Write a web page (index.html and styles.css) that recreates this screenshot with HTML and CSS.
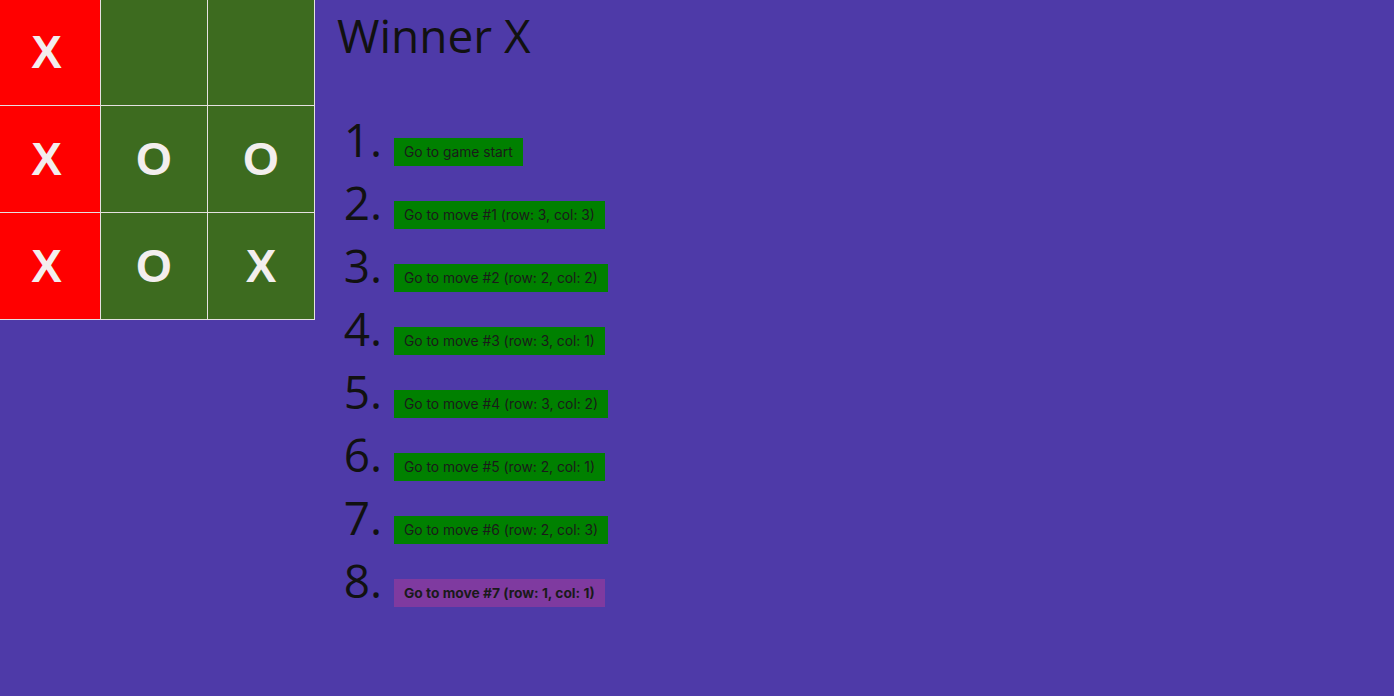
FILE: index.html
```html
<!DOCTYPE html>
<html lang="en">
<head>
    <meta charset="UTF-8">
    <meta name="viewport" content="width=device-width, initial-scale=1.0">
    <title>Tic Tac Toe</title>
    <link rel="stylesheet" href="styles.css">
</head>
<body>

    <div class="game">
        <div class="game-board">
            <div class="board-row">
                <button class="square win">X</button>
                <button class="square"></button>
                <button class="square"></button>
            </div>
            <div class="board-row">
                <button class="square win">X</button>
                <button class="square">O</button>
                <button class="square">O</button>
            </div>
            <div class="board-row">
                <button class="square win">X</button>
                <button class="square">O</button>
                <button class="square">X</button>
            </div>
        </div>

        <div class="game-info">
            <div class="status">Winner X</div>
            <ol class="moves">
                <li><button class="move">Go to game start</button></li>
                <li><button class="move">Go to move #1 (row: 3, col: 3)</button></li>
                <li><button class="move">Go to move #2 (row: 2, col: 2)</button></li>
                <li><button class="move">Go to move #3 (row: 3, col: 1)</button></li>
                <li><button class="move">Go to move #4 (row: 3, col: 2)</button></li>
                <li><button class="move">Go to move #5 (row: 2, col: 1)</button></li>
                <li><button class="move">Go to move #6 (row: 2, col: 3)</button></li>
                <li><button class="move current">Go to move #7 (row: 1, col: 1)</button></li>
            </ol>
        </div>
    </div>

</body>
</html>
```

FILE: styles.css
```css
body {
    margin: 0;
    background-color: #4e3aa8; /* purple background */
    font-family: "Liberation Sans", Arial, sans-serif;
}
.game {
    display: flex;
    flex-direction: row;
    align-items: flex-start;
}
.game-board {
    margin-left: -7px; /* board sits slightly off the left/top edge */
    margin-top: -2px;
    border-right: 1px solid #e6e1e1;
    border-bottom: 1px solid #e6e1e1;
}
.board-row {
    display: flex;
}
.square {
    width: 107px;
    height: 107px;
    margin: 0;
    padding: 0;
    border: none;
    border-left: 1px solid #e6e1e1;
    border-top: 1px solid #e6e1e1;
    background-color: #3d6b1f;
    color: #f3eeee;
    font-family: "Liberation Sans", Arial, sans-serif;
    font-size: 46px;
    font-weight: bold;
    line-height: 1;
}
.board-row:first-child .square {
    border-top: none;
}
.square:first-child {
    border-left: none;
}
.square.win {
    background-color: #ff0000;
}
.game-info {
    margin-left: 22px;
    margin-top: 2px;
}
.status {
    font-family: "Open Sans", sans-serif;
    font-size: 46px;
    font-weight: 500;
    color: #111;
    line-height: 66px;
}
.moves {
    margin: 40px 0 0 0;
    padding-left: 57px;
    font-family: "Open Sans", sans-serif;
    font-size: 46px;
    font-weight: 500;
    color: #111;
}
.moves li {
    line-height: 63px;
}
.move {
    vertical-align: baseline;
    padding: 6px 10px;
    border: none;
    background-color: #008000;
    color: #1a1a1a;
    font-family: Inter, "Liberation Sans", sans-serif;
    font-size: 13.8px;
    font-weight: 400;
    line-height: 16px;
}
.move.current {
    background-color: #7f3aa0;
    font-weight: bold;
}
```
